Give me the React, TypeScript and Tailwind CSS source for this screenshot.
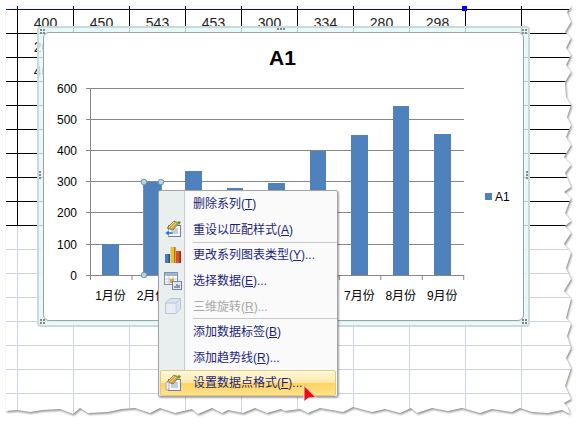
import React from 'react';

const SANS = '"Liberation Sans","Noto Sans CJK SC",sans-serif';

const values = ['400', '450', '543', '453', '300', '334', '280', '298', '', ''];
const rowTwo = ['200', '', '', '', '', '', '', '', '', ''];
const rowThree = ['400', '', '', '', '', '', '', '', '', ''];

const bars = [
    { x: 102, y: 244, w: 17 },
    { x: 144, y: 182, w: 17 },
    { x: 185, y: 171, w: 17 },
    { x: 227, y: 188, w: 16 },
    { x: 268, y: 183, w: 17 },
    { x: 310, y: 151, w: 16 },
    { x: 351, y: 135, w: 17 },
    { x: 393, y: 106, w: 16 },
    { x: 434, y: 134, w: 17 },
];
const ticksY = [88.5, 119.5, 150.5, 181.5, 212.5, 244.5, 275.5];
const labelsY = ['600', '500', '400', '300', '200', '100', '0'];
// the labels of 3月份 to 6月份 lie under the context menu
const months = [
    { text: '1月份', slot: 0 },
    { text: '2月份', slot: 1 },
    { text: '7月份', slot: 6 },
    { text: '8月份', slot: 7 },
    { text: '9月份', slot: 8 },
];

// torn paper edge, traced from the picture
const rightEdge = [
    [571, 7], [567, 12], [571, 22], [565, 32], [571, 38], [566, 48], [571, 55], [566, 65], [571, 72], [565, 82], [566, 97], [571, 105],
    [567, 117], [571, 125], [566, 137], [571, 145], [564, 157], [571, 165], [565, 173], [571, 187], [564, 192], [571, 198], [565, 213],
    [571, 221], [565, 226], [571, 233], [564, 244], [571, 253], [566, 268], [571, 279], [564, 291], [571, 299], [566, 318], [571, 324],
    [567, 336], [571, 348], [566, 358], [571, 368], [565, 386], [571, 399], [564, 403], [569, 409],
];
const bottomEdge = [
    [568, 408], [570, 414], [562, 410], [548, 413], [532, 412], [520, 408], [512, 412], [492, 409], [480, 413], [462, 408], [448, 411],
    [432, 408], [417, 413], [411, 408], [400, 413], [385, 409], [372, 412], [353, 407], [343, 412], [320, 408], [308, 413], [300, 409],
    [285, 411], [281, 409], [267, 413], [255, 408], [243, 413], [228, 410], [222, 413], [212, 408], [198, 414], [192, 409], [175, 413],
    [160, 408], [150, 413], [135, 408], [122, 409], [108, 412], [88, 413], [80, 408], [73, 414], [60, 409], [43, 410], [30, 412],
    [17, 410], [6, 411],
];
const outline = [[6, 6], [571, 6], ...rightEdge, ...bottomEdge];
const outlinePath = 'M' + outline.map((p) => p.join(' ')).join('L') + 'Z';

const Underlined = ({ k }: { k: string }) => (
    <>
        (<span className="underline">{k}</span>)
    </>
);

const BrushIcon = ({ arrow }: { arrow?: boolean }) => (
    <svg width="18" height="18" viewBox="0 0 18 18">
        <rect x="4.5" y="5.5" width="12" height="11" fill="#f4f7fb" stroke="#6f819b" />
        <path d="M7 9h7M7 11h7M7 13h7" stroke="#93a6bf" />
        <path d="M3 8L10 1l5 2-6 7z" fill="#cfa647" stroke="#7f6a2c" strokeWidth="0.7" />
        <path d="M5 7l5-5M7 8l5-5" stroke="#f5e2a0" strokeWidth="0.8" />
        <path d="M14 1l3 1-2 3z" fill="#4f9338" />
        {arrow ? <path d="M1 13l4-3v2h4v2H5v2z" fill="#2f74cc" stroke="#fff" strokeWidth="0.4" /> : <path d="M2 8h3v8H2z" fill="#e6edf5" stroke="#7f90a8" strokeWidth="0.6" />}
    </svg>
);

const BarsIcon = () => (
    <svg width="18" height="18" viewBox="0 0 18 18">
        <rect x="1" y="8" width="5" height="9" fill="#3f7fc0" />
        <rect x="4.6" y="8" width="1.4" height="9" fill="#1f4f86" />
        <rect x="6.5" y="1" width="5" height="16" fill="#eebc30" />
        <rect x="10" y="1" width="1.5" height="16" fill="#a87c14" />
        <rect x="12" y="5" width="5" height="12" fill="#e4492c" />
        <rect x="15.5" y="5" width="1.5" height="12" fill="#9c2a16" />
    </svg>
);

const DataIcon = () => (
    <svg width="18" height="18" viewBox="0 0 18 18">
        <rect x="0.5" y="0.5" width="13" height="12" fill="#fff" stroke="#7f93ad" />
        <rect x="1" y="1" width="12" height="3" fill="#9db6d6" />
        <path d="M1 7h12M1 10h12M5 4v8M9 4v8" stroke="#b9c6d8" />
        <rect x="6" y="7" width="4" height="4" fill="#ef9a3a" />
        <rect x="8.5" y="9.5" width="9" height="8" fill="#dfe5ec" stroke="#74859b" />
        <path d="M11 16v-2M13 16v-4M15 16v-3" stroke="#4d6a8c" strokeWidth="1.2" />
    </svg>
);

const CubeIcon = () => (
    <svg width="18" height="18" viewBox="0 0 18 18">
        <path d="M1.5 6L6 1.5h10.5V12L12 16.5H1.5z" fill="#d9e3ee" stroke="#b9c6d6" />
        <path d="M1.5 6H12v10.5M12 6l4.5-4.5" fill="none" stroke="#bfcbd9" />
        <rect x="2.5" y="7" width="9" height="9" fill="#e6edf5" />
    </svg>
);

const items = [
    { label: '删除系列', k: 'T', tail: '' },
    { label: '重设以匹配样式', k: 'A', tail: '', icon: <BrushIcon arrow />, sep: true },
    { label: '更改系列图表类型', k: 'Y', tail: '...', icon: <BarsIcon /> },
    { label: '选择数据', k: 'E', tail: '...', icon: <DataIcon /> },
    { label: '三维旋转', k: 'R', tail: '...', icon: <CubeIcon />, disabled: true, sep: true },
    { label: '添加数据标签', k: 'B', tail: '' },
    { label: '添加趋势线', k: 'R', tail: '...' },
    { label: '设置数据点格式', k: 'F', tail: '...', icon: <BrushIcon />, active: true },
];

const SheetRow = ({ cells, light, first }: { cells: string[]; light?: boolean; first?: boolean }) => {
    const line = light ? 'border-[#cdd3e3]' : 'border-black';
    return (
        <div className={`flex shrink-0 ${first ? 'h-1' : 'h-6'}`}>
            <div className={`w-3 shrink-0 border-r border-b ${first ? 'border-r-black border-b-[#0000d8]' : line}`} />
            {cells.map((text, i) => (
                <div
                    key={i}
                    className={`w-14 shrink-0 border-r border-b text-center text-[14px] leading-[27px] text-[#222] ${line} ${first && i < 8 ? 'border-b-[#0000d8]' : ''}`}
                >
                    {text}
                </div>
            ))}
        </div>
    );
};

const Dots = ({ className }: { className: string }) => (
    <div className={`absolute flex gap-px ${className}`}>
        <span className="size-[2px] bg-[#7f8a8c]" />
        <span className="size-[2px] bg-[#7f8a8c]" />
        <span className="size-[2px] bg-[#7f8a8c]" />
    </div>
);

const Corner = ({ className }: { className: string }) => (
    <div className={`absolute grid grid-cols-2 gap-px ${className}`}>
        <span className="size-[2px] bg-[#7f8a8c]" />
        <span className="size-[2px] bg-[#7f8a8c]" />
        <span className="size-[2px] bg-[#7f8a8c]" />
        <span className="size-[2px] bg-[#7f8a8c]" />
    </div>
);

const ChartPlot = () => (
    <svg className="block" width="479" height="287" viewBox="44 33 479 287" fontFamily={SANS}>
        <text x="282.5" y="65" textAnchor="middle" fontSize="21" fontWeight="700" fill="#000">A1</text>
        {ticksY.map((y, i) => (
            <g key={y}>
                <line x1="86" x2="464" y1={y} y2={y} stroke="#868686" />
                <text x="77" y={y + 4} textAnchor="end" fontSize="12" fill="#000">{labelsY[i]}</text>
            </g>
        ))}
        <line x1="90.5" x2="90.5" y1="88" y2="280" stroke="#868686" />
        {Array.from({ length: 10 }, (_, i) => 90.5 + i * 41.47).map((x) => (
            <line key={x} x1={x} x2={x} y1="275" y2="280" stroke="#868686" />
        ))}
        {bars.map((b) => (
            <rect key={b.x} x={b.x} y={b.y} width={b.w} height={275 - b.y} fill="#4f81bd" />
        ))}
        <rect x="143.5" y="181.5" width="18" height="94" fill="none" stroke="#8a8a8a" />
        {months.map((m) => (
            <text key={m.text} x={110.5 + m.slot * 41.47} y="300" textAnchor="middle" fontSize="12" fill="#000">{m.text}</text>
        ))}
        {[[144, 182], [161, 182], [144, 275]].map(([cx, cy]) => (
            <circle key={`${cx}-${cy}`} cx={cx} cy={cy} r="2.8" fill="#b5d6dd" stroke="#6c98a6" />
        ))}
        <rect x="485" y="193" width="7" height="7" fill="#4f81bd" />
        <text x="495" y="201" fontSize="12" fill="#000">A1</text>
    </svg>
);

const ContextMenu = () => (
    <div
        className="absolute left-[158px] top-[190px] w-[180px] rounded-[2px] border border-[#a3a3a3] bg-[linear-gradient(90deg,#e9eeee_25px,#c8cccc_25px,#c8cccc_26px,#fafafa_26px)] shadow-[1px_1px_2px_rgba(0,0,0,0.35)]"
        style={{ fontFamily: SANS }}
    >
        {items.map((item) => (
            <React.Fragment key={item.label}>
                <div
                    className={`mx-px flex h-[25.6px] items-center rounded-[2px] border text-[12px] ${
                        item.active
                            ? 'border-[#e3ca83] bg-[linear-gradient(180deg,#fff8dc_0%,#ffe9aa_48%,#ffd35c_50%,#ffe28c_100%)]'
                            : 'border-transparent'
                    } ${item.disabled ? 'text-[#a8a8a8]' : 'text-[#1c1f7a]'}`}
                >
                    <div className="flex w-6 shrink-0 items-center justify-center">{item.icon}</div>
                    <div className="pl-2 pt-px whitespace-nowrap">
                        {item.label}
                        <Underlined k={item.k} />
                        {item.tail}
                    </div>
                </div>
                {item.sep && <div className="relative z-10 -my-[0.5px] ml-[34px] h-px bg-[#c8c8c8]" />}
            </React.Fragment>
        ))}
        <svg className="absolute left-[144px] top-[194px]" width="14" height="18" viewBox="0 0 14 18">
            <path d="M1 0.5v16l4.5-3.5 7.5-0.5z" fill="#f00a14" stroke="#fff" strokeWidth="0.8" />
        </svg>
    </div>
);

const App: React.FC = () => {
    return (
        <div className="relative h-[426px] w-[584px] overflow-hidden bg-white" style={{ fontFamily: SANS }}>
            {/* worksheet */}
            <div className="absolute left-[6px] top-[6px] flex flex-col">
                <SheetRow first cells={Array(10).fill('')} />
                <SheetRow cells={values} />
                <SheetRow cells={rowTwo} />
                <SheetRow cells={rowThree} />
                {[0, 1, 2, 3, 4, 5].map((i) => <SheetRow key={i} cells={Array(10).fill('')} />)}
                {[0, 1, 2, 3, 4, 5, 6, 7].map((i) => <SheetRow key={i} light cells={Array(10).fill('')} />)}
            </div>
            <div className="absolute left-[462px] top-[6px] size-[5px] bg-[#0000ff]" />

            {/* chart object */}
            <div className="absolute left-[37px] top-[26px] h-[301px] w-[493px] rounded-[4px] border-2 border-[#ccd9da] bg-[#e2f7f8]/80 p-1">
                <div className="overflow-hidden rounded-[6px] border border-[#9aa3a5] bg-white">
                    <ChartPlot />
                </div>
                <Corner className="left-[1px] top-[1px]" />
                <Corner className="right-[1px] top-[1px]" />
                <Corner className="bottom-[1px] left-[1px]" />
                <Corner className="bottom-[1px] right-[1px]" />
                <Dots className="left-[238px] top-0" />
                <Dots className="left-0 top-[143px] flex-col" />
                <Dots className="right-0 top-[143px] flex-col" />
            </div>

            <ContextMenu />

            {/* torn edge and its shadow */}
            <svg className="absolute inset-0" width="584" height="426" viewBox="0 0 584 426">
                <defs>
                    <clipPath id="outside">
                        <path clipRule="evenodd" d={`M0 0H584V426H0Z${outlinePath}`} />
                    </clipPath>
                    <filter id="soft" x="-5%" y="-5%" width="110%" height="110%">
                        <feGaussianBlur stdDeviation="1.3" />
                    </filter>
                </defs>
                <path fillRule="evenodd" d={`M0 0H584V426H0Z${outlinePath}`} fill="#fff" />
                <g clipPath="url(#outside)">
                    <path d={outlinePath} transform="translate(1 1.5)" fill="#8a8a8a" filter="url(#soft)" />
                </g>
            </svg>
        </div>
    );
};

export default App;
